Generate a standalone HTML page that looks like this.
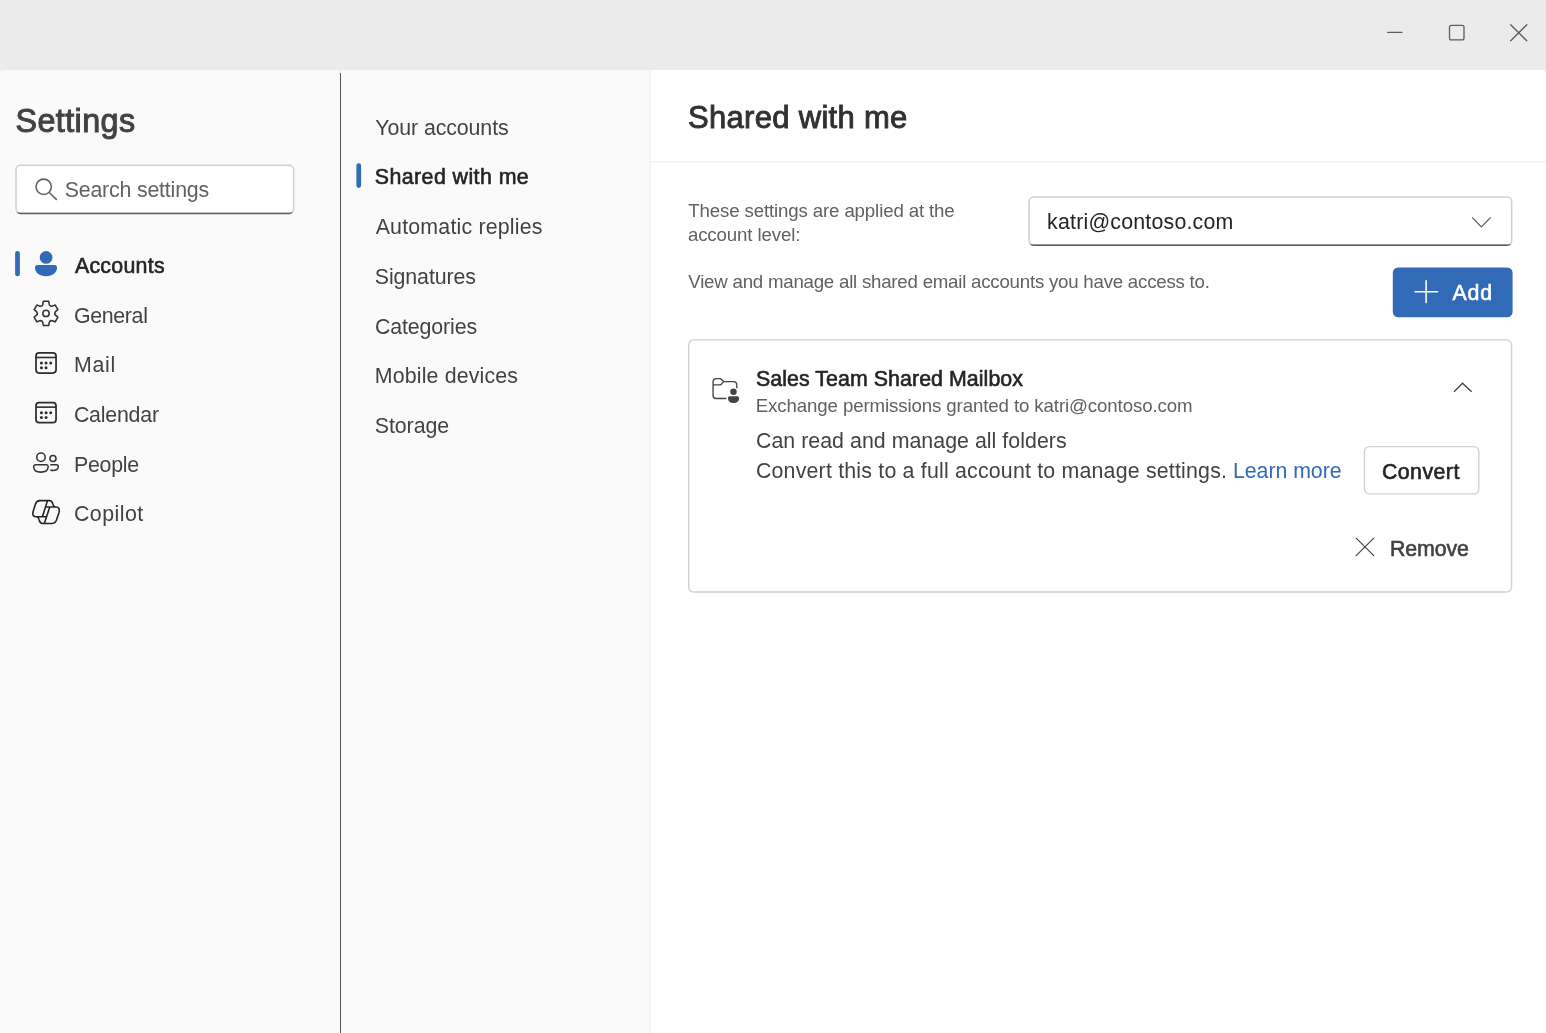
<!DOCTYPE html>
<html lang="en">
<head>
<meta charset="utf-8">
<title>Settings</title>
<style>
*{box-sizing:border-box;margin:0;padding:0}
html,body{width:1546px;height:1033px;overflow:hidden;background:#ebebeb}
body{font-family:"Liberation Sans",sans-serif;color:#424242;position:relative}
.abs{position:absolute}
.t{position:absolute;white-space:nowrap;line-height:1}
#left{left:0;top:70px;width:340px;height:963px;background:#fafafa;border-top-left-radius:3px}
#divider{left:340px;top:73px;width:1px;height:960px;background:#555}
#mid{left:341px;top:70px;width:309px;height:963px;background:#fafafa}
#right{left:649px;top:70px;width:897px;height:963px;background:#fff;border-top-right-radius:3px;border-left:2px solid #f5f5f5}
#hdrline{display:none}
.nav{font-size:21.33px;color:#424242}
.b{color:#242424}
.sb{font-weight:normal;-webkit-text-stroke-width:0.6px}
svg{position:absolute;overflow:visible}
#txt{position:absolute;left:0;top:0;width:1546px;height:1033px;will-change:transform}
</style>
</head>
<body>
<div id="left" class="abs"></div>
<div id="divider" class="abs"></div>
<div id="mid" class="abs"></div>
<div id="right" class="abs"></div>
<div id="hdrline" class="abs"></div>
<svg id="gfx" width="1546" height="1033" viewBox="0 0 1546 1033" style="position:absolute;left:0;top:0">
<rect x="651" y="161" width="895" height="1.6" fill="#f3f2f1"/>
<g fill="none" stroke="#5c5c5c" stroke-width="1.3" stroke-linecap="round"><path d="M1387.6 32.4H1401.9"/><rect x="1449.5" y="25.4" width="14.5" height="14.5" rx="1.9"/><path d="M1510.7 24.7L1526.8 40.8M1526.8 24.7L1510.7 40.8"/></g>
<rect x="16" y="165.3" width="277.67" height="48" rx="4.7" fill="#fff" stroke="#cfcfcf" stroke-width="1.5"/><clipPath id="cps"><rect x="14" y="212.45" width="281.67" height="3"/></clipPath><rect x="16" y="165.3" width="277.67" height="48" rx="4.7" fill="none" stroke="#5c5c5c" stroke-width="1.7" clip-path="url(#cps)"/>
<g fill="none" stroke="#616161" stroke-width="1.55" stroke-linecap="round"><circle cx="43.7" cy="186.8" r="7.67"/><path d="M49.3 192.5L56.3 199.4"/></g>
<rect x="15.1" y="251" width="4.8" height="25.3" rx="2.4" fill="#316ab7"/>
<rect x="356.4" y="163.2" width="4.7" height="24.7" rx="2.35" fill="#316ab7"/>
<circle cx="46.1" cy="257.4" r="6.35" fill="#316ab7"/><path d="M37.73 265.1H54.31A2.75 2.75 0 0 1 57.06 267.85C57.06 272.5 52.5 276.34 46.02 276.34C39.5 276.34 34.98 272.5 34.98 267.85A2.75 2.75 0 0 1 37.73 265.1Z" fill="#316ab7"/>
<g fill="none" stroke="#333" stroke-width="1.55" stroke-linejoin="round"><path d="M43.33 301.28L48.71 301.28L49.22 304.38Q49.97 306.59 52.25 306.13L55.2 305.02L57.89 309.69L55.46 311.68Q53.92 313.43 55.46 315.18L57.89 317.17L55.2 321.84L52.25 320.73Q49.97 320.27 49.22 322.48L48.71 325.58L43.33 325.58L42.82 322.48Q42.07 320.27 39.79 320.73L36.84 321.84L34.15 317.17L36.58 315.18Q38.12 313.43 36.58 311.68L34.15 309.69L36.84 305.02L39.79 306.13Q42.07 306.59 42.82 304.38Z"/><circle cx="46.02" cy="313.43" r="3.17"/></g>
<g fill="none" stroke="#2e2e2e"><rect x="36" y="352.85" width="20.05" height="20.2" rx="3.2" stroke-width="1.75"/><path d="M36 357.48H56.05" stroke-width="1.6"/></g><g fill="#2e2e2e"><circle cx="41.42" cy="363.05" r="1.5"/><circle cx="46.05" cy="363.05" r="1.5"/><circle cx="50.73" cy="363.05" r="1.5"/><circle cx="41.42" cy="367.73" r="1.5"/><circle cx="46.05" cy="367.73" r="1.5"/></g>
<g fill="none" stroke="#2e2e2e"><rect x="36" y="402.5" width="20.05" height="20.2" rx="3.2" stroke-width="1.75"/><path d="M36 407.13H56.05" stroke-width="1.6"/></g><g fill="#2e2e2e"><circle cx="41.42" cy="412.7" r="1.5"/><circle cx="46.05" cy="412.7" r="1.5"/><circle cx="50.73" cy="412.7" r="1.5"/><circle cx="41.42" cy="417.38" r="1.5"/><circle cx="46.05" cy="417.38" r="1.5"/></g>
<g fill="none" stroke="#333" stroke-width="1.55" stroke-linecap="butt"><circle cx="40.98" cy="457.29" r="4.2"/><circle cx="52.97" cy="458.5" r="3.05"/><path d="M35.6 464.75H46.2A1.95 1.95 0 0 1 48.15 466.7C48.15 470.6 45.9 472.1 40.9 472.1C35.9 472.1 33.65 470.6 33.65 466.7A1.95 1.95 0 0 1 35.6 464.75Z"/><path d="M50.3 464.7H56.4A1.9 1.9 0 0 1 58.3 466.6C58.3 469.3 55.5 470.4 53.4 470.4C52.3 470.4 51.2 470.2 50.4 469.9"/></g>
<path d="M47.52 500.62L39.5 500.62Q36.71 500.69 35.49 503.93L33.16 511.43Q31.83 516.31 35.49 516.73L46.65 516.73M47.52 500.62L42.46 516.59M44.38 523.35L52.4 523.45Q55.19 523.35 56.41 520.32L58.95 512.65Q60.24 507.42 56.58 506.97L45.78 506.83M49.78 506.97L44.38 523.35M47.52 500.62L49.26 500.52Q52.05 500.62 52.82 503.93Q53.17 506.03 54.84 506.83M44.38 523.35L42.81 523.45Q39.85 523.35 39.15 519.97Q38.81 517.88 37.24 516.83" fill="none" stroke="#242424" stroke-width="1.6" stroke-linejoin="round" stroke-linecap="round"/>
<rect x="1029.07" y="197.07" width="482.61" height="48.06" rx="4.7" fill="#fff" stroke="#cfcfcf" stroke-width="1.5"/><clipPath id="cpd"><rect x="1027.07" y="244.28" width="486.61" height="3"/></clipPath><rect x="1029.07" y="197.07" width="482.61" height="48.06" rx="4.7" fill="none" stroke="#5c5c5c" stroke-width="1.7" clip-path="url(#cpd)"/>
<path d="M1472.1 217.4L1481.4 226.9L1490.7 217.4" fill="none" stroke="#616161" stroke-width="1.35"/>
<rect x="1392.8" y="267.5" width="119.8" height="49.8" rx="5.4" fill="#316ab7"/><path d="M1426.1 280.7V302.6M1415.2 291.75H1437.6" stroke="#fff" stroke-width="1.55" stroke-linecap="round" fill="none"/>
<rect x="688.65" y="339.9" width="822.9" height="252.1" rx="5.3" fill="#fff" stroke="#d1d1d1" stroke-width="1.4"/>
<path d="M726.37 398.53L716.21 398.53Q713.06 398.53 713.06 395.39L713.06 381.94Q713.06 378.69 716.45 378.69L720.56 378.69L723.56 381.6L733.39 381.6Q736.77 381.6 736.77 385.08L736.77 388.23M713.06 384.94L720.56 384.94L723.56 381.6" fill="none" stroke="#424242" stroke-width="1.35" stroke-linejoin="round"/><circle cx="733.48" cy="391.76" r="3.25" fill="#424242"/><path d="M729.57 396.35H737.5A1.6 1.6 0 0 1 739.1 397.95C739.1 401.25 737.13 402.98 733.53 402.98C729.93 402.98 727.97 401.25 727.97 397.95A1.6 1.6 0 0 1 729.57 396.35Z" fill="#424242"/>
<path d="M1454.05 391.8L1462.57 383.2L1471.6 391.8" fill="none" stroke="#424242" stroke-width="1.3"/>
<rect x="1364.47" y="446.57" width="114.36" height="47.36" rx="4.9" fill="#fff" stroke="#d1d1d1" stroke-width="1.35"/>
<path d="M1356.14 538.14L1373.81 555.6M1373.81 538.14L1356.14 555.6" fill="none" stroke="#424242" stroke-width="1.2" stroke-linecap="round"/>
</svg>
<div id="txt">


<!-- left panel -->
<div class="t sb" id="h-settings" style="left:15.41px;top:105.13px;font-size:32.3px;-webkit-text-stroke-width:1px;color:#424242;letter-spacing:0.43px">Settings</div>
<div class="t" id="ph" style="left:64.70px;top:180.05px;font-size:21.33px;color:#616161;letter-spacing:-0.18px">Search settings</div>

<div class="t nav b sb" id="n1" style="left:74.89px;top:256.08px;letter-spacing:0.28px">Accounts</div>
<div class="t nav" id="n2" style="left:73.90px;top:305.82px;letter-spacing:-0.31px">General</div>
<div class="t nav" id="n3" style="left:74.07px;top:355.05px;letter-spacing:0.65px">Mail</div>
<div class="t nav" id="n4" style="left:73.91px;top:404.94px;letter-spacing:-0.21px">Calendar</div>
<div class="t nav" id="n5" style="left:74.07px;top:454.80px;letter-spacing:-0.28px">People</div>
<div class="t nav" id="n6" style="left:73.91px;top:503.80px;letter-spacing:0.50px">Copilot</div>

<!-- middle panel -->
<div class="t nav" id="m1" style="left:375.34px;top:117.80px;letter-spacing:-0.09px">Your accounts</div>
<div class="t nav b sb" id="m2" style="left:374.80px;top:167.02px;letter-spacing:0.44px">Shared with me</div>
<div class="t nav" id="m3" style="left:375.69px;top:217.00px;letter-spacing:0.20px">Automatic replies</div>
<div class="t nav" id="m4" style="left:374.80px;top:266.94px;letter-spacing:-0.09px">Signatures</div>
<div class="t nav" id="m5" style="left:374.89px;top:316.75px;letter-spacing:-0.09px">Categories</div>
<div class="t nav" id="m6" style="left:374.82px;top:365.95px;letter-spacing:0.16px">Mobile devices</div>
<div class="t nav" id="m7" style="left:374.80px;top:415.90px;letter-spacing:-0.07px">Storage</div>

<!-- right panel -->
<div class="t sb" id="h-shared" style="left:687.96px;top:102.24px;font-size:31px;-webkit-text-stroke-width:0.9px;color:#323130;letter-spacing:0.31px">Shared with me</div>
<div class="t" id="lbl1" style="left:688.19px;top:201.80px;font-size:18.67px;color:#616161;letter-spacing:-0.13px">These settings are applied at the</div>
<div class="t" id="lbl2" style="left:687.91px;top:226.20px;font-size:18.67px;color:#616161;letter-spacing:-0.12px">account level:</div>
<div class="t" id="ddt" style="left:1047.12px;top:211.85px;font-size:21.33px;color:#242424;letter-spacing:0.21px">katri@contoso.com</div>
<div class="t" id="desc" style="left:688.30px;top:272.75px;font-size:18.67px;color:#616161;letter-spacing:-0.22px">View and manage all shared email accounts you have access to.</div>
<div class="t sb" id="addt" style="left:1452.52px;top:283.23px;font-size:21.33px;color:#fff;letter-spacing:0.82px">Add</div>

<div class="t sb" id="c1" style="left:756.07px;top:368.98px;font-size:21.33px;color:#242424;letter-spacing:0.07px">Sales Team Shared Mailbox</div>
<div class="t" id="c2" style="left:755.78px;top:396.90px;font-size:18.67px;color:#616161;letter-spacing:-0.11px">Exchange permissions granted to katri@contoso.com</div>
<div class="t" id="c3" style="left:755.96px;top:430.75px;font-size:21.33px;color:#424242;letter-spacing:0.04px">Can read and manage all folders</div>
<div class="t" id="c4" style="left:755.96px;top:461.15px;font-size:21.33px;color:#424242;letter-spacing:0.20px">Convert this to a full account to manage settings.</div>
<div class="t" id="c5" style="left:1232.96px;top:460.90px;font-size:21.33px;color:#316ab7;letter-spacing:-0.05px">Learn more</div>
<div class="t sb" id="convt" style="left:1381.93px;top:462.21px;font-size:21.33px;color:#242424;letter-spacing:0.46px">Convert</div>
<div class="t sb" id="remt" style="left:1390.12px;top:539.19px;font-size:21.33px;color:#424242;letter-spacing:-0.15px">Remove</div>
</div>
</body>
</html>
